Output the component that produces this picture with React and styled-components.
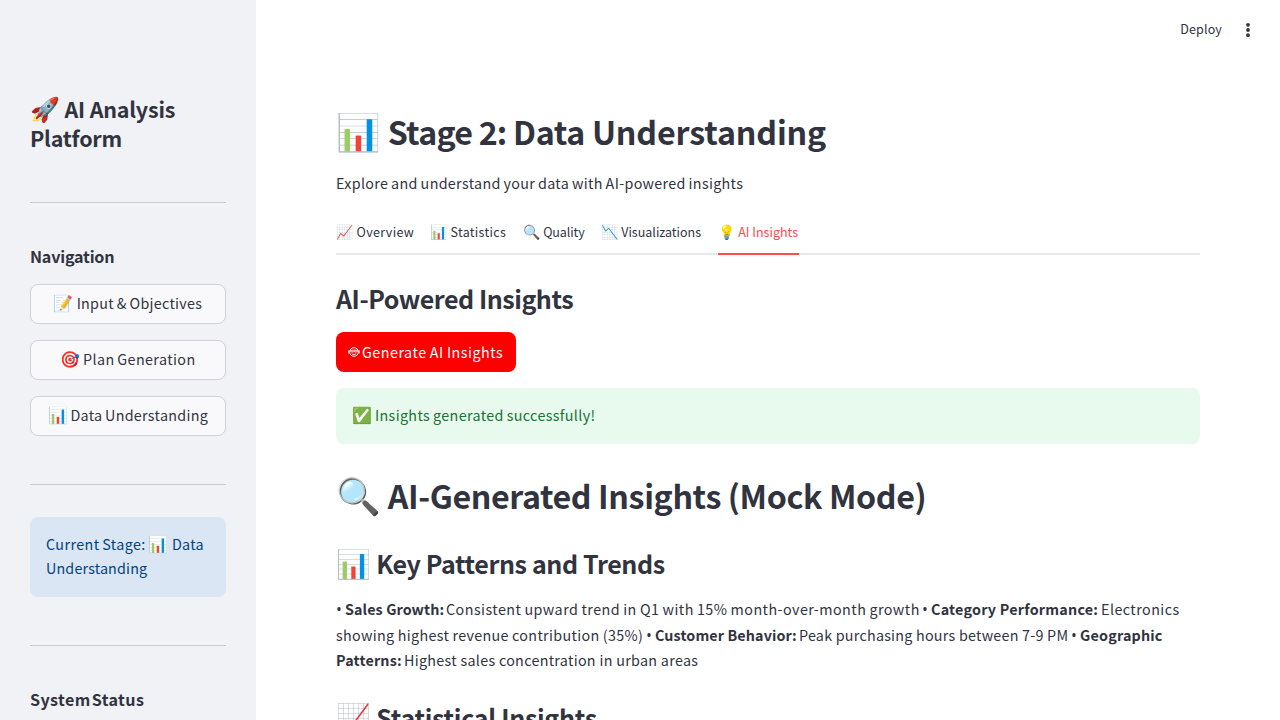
import React from "react";
import styled, { createGlobalStyle, css } from "styled-components";

const GlobalStyle = createGlobalStyle`
  * { box-sizing: border-box; }
  html, body { margin: 0; padding: 0; height: 100%; overflow: hidden; }
  body {
    font-family: "Noto Sans CJK SC", sans-serif;
    color: #31333f;
    background: #fff;
  }
`;

/* The face runs large for its nominal size, so text is set at 0.895 of the design size. */
const type = (size, line, weight = 400) => css`
  font-size: ${size * 0.895}px;
  line-height: ${line}px;
  font-weight: ${weight};
  letter-spacing: ${(p) => p.$track || 0}px;
  word-spacing: ${(p) => p.$gap || 0}px;
  white-space: nowrap;
`;

const Page = styled.div`
  display: flex;
  height: 720px;
  overflow: hidden;
`;

const Sidebar = styled.aside`
  width: 256px;
  flex: none;
  background: #f0f2f6;
  padding: 94px 30px 0;
`;

const SidebarTitle = styled.h2`
  margin: 0;
  height: 60px;
  ${type(24, 29, 600)}
`;

const Rule = styled.hr`
  border: 0;
  height: 1px;
  margin: ${(p) => p.$top}px 0 ${(p) => p.$bottom}px;
  background: #cacbd1;
`;

const SidebarHeading = styled.h3`
  margin: 0;
  height: 23px;
  ${type(18, 22, 600)}
`;

const NavList = styled.nav`
  display: flex;
  flex-direction: column;
  gap: 16px;
  margin-top: 16px;
`;

const NavButton = styled.button`
  display: flex;
  align-items: center;
  justify-content: center;
  height: 40px;
  padding: 0 0 2px;
  border: 1px solid #d0d2d8;
  border-radius: 8px;
  background: #f9f9fb;
  color: inherit;
  font-family: inherit;
  ${type(16, 24)}
`;

const StageInfo = styled.div`
  height: 80px;
  padding: 15px 16px;
  border-radius: 8px;
  background: #dae6f4;
  color: #004280;
  ${type(16, 24)}
`;

const Main = styled.main`
  flex: 1;
  min-width: 0;
`;

const Toolbar = styled.header`
  display: flex;
  align-items: center;
  justify-content: flex-end;
  gap: 18px;
  height: 60px;
  padding-right: 24px;
`;

const DeployLabel = styled.span`
  padding-bottom: 2px;
  ${type(14, 20)}
`;

const Content = styled.div`
  padding: 49px 80px 0;
`;

const Title = styled.h1`
  margin: ${(p) => p.$top || 0}px 0 0;
  height: 46px;
  ${type(36, 44, 600)}
`;

const Heading = styled.h2`
  margin: ${(p) => p.$top}px 0 0;
  height: 36px;
  ${type(28, 34, 600)}
`;

const Lead = styled.p`
  margin: 15px 0 0;
  ${type(16, 26)}
`;

const TabBar = styled.div`
  display: flex;
  gap: 16px;
  height: 40px;
  margin-top: 19px;
  box-shadow: inset 0 -2px #e8e8ea;
`;

const Tab = styled.button`
  height: 40px;
  padding: 0 0 4px;
  border: 0;
  border-bottom: 2px solid ${(p) => (p.$active ? "#ff4b4b" : "transparent")};
  background: none;
  color: ${(p) => (p.$active ? "#ff4b4b" : "inherit")};
  font-family: inherit;
  text-align: left;
  width: ${(p) => p.$width}px;
  ${type(14, 32)}
`;

const PrimaryButton = styled.button`
  display: flex;
  align-items: center;
  width: 180px;
  height: 40px;
  margin-top: 15px;
  padding: 0 12px;
  border: 0;
  border-radius: 8px;
  background: #ff0000;
  color: #fff;
  font-family: inherit;
  ${type(16, 24)}
`;

const Success = styled.div`
  height: 56px;
  margin-top: 16px;
  padding: 15px 16px;
  border-radius: 8px;
  background: #e8f9ee;
  color: #177233;
  ${type(16, 24)}
`;

const Findings = styled.div`
  margin-top: 14px;
`;

const Line = styled.div`
  display: flex;
  align-items: baseline;
  height: 25.6px;
  ${type(16, 25.6)}
`;

const Run = styled.span`
  letter-spacing: ${(p) => p.$track}px;
  word-spacing: ${(p) => p.$gap || 0}px;
  font-weight: ${(p) => (p.$strong ? 600 : 400)};
  width: ${(p) => p.$width}px;
  flex: none;
`;

const Bullet = styled.span`
  width: 9px;
  flex: none;
  font-family: "Open Sans", sans-serif;
  font-size: 15.5px;
  line-height: 20px;
  letter-spacing: 0;
`;

const Emoji = styled.span`
  font-family: "Noto Color Emoji", sans-serif;
  font-size: 1.117em;
  font-weight: 400;
  line-height: 0;
  letter-spacing: 0;
`;

const KebabIcon = () => (
  <svg width="16" height="16" viewBox="0 0 16 16" fill="#31333f">
    <circle cx="8" cy="2.8" r="1.9" />
    <circle cx="8" cy="8" r="1.9" />
    <circle cx="8" cy="13.2" r="1.9" />
  </svg>
);

const RobotSvg = styled.svg`
  flex: none;
  margin-right: 2px;
`;

const RobotIcon = () => (
  <RobotSvg width="12" height="12" viewBox="0 0 12 12" fill="none" stroke="#fff">
    <ellipse cx="6" cy="6" rx="4.4" ry="4.3" strokeWidth="1" />
    <path d="M0.8 4.4v3M11.2 4.4v3" strokeWidth="1" />
    <path d="M2.6 4.1h6.8v1.5l-1.4.7-2-.6-2 .6-1.4-.7z" fill="#fff" fillOpacity="0.45" strokeWidth="0.6" />
    <path d="M3.8 7.8c1.2.9 3.2.9 4.4 0" strokeWidth="0.9" />
  </RobotSvg>
);

const tabs = [
  { icon: "📈", label: "Overview", width: 78, track: 0.33 },
  { icon: "📊", label: "Statistics", width: 77, track: 0.3 },
  { icon: "🔍", label: "Quality", width: 62, track: -0.1 },
  { icon: "📉", label: "Visualizations", width: 101, track: 0 },
  { icon: "💡", label: "AI Insights", width: 81, track: 0, active: true },
];

const stages = [
  { icon: "📝", label: "Input & Objectives", track: 0.27, gap: -0.6 },
  { icon: "🎯", label: "Plan Generation", track: 0.4, gap: -0.9 },
  { icon: "📊", label: "Data Understanding", track: 0.3, gap: -0.9 },
];

export default function App() {
  return (
    <>
      <GlobalStyle />
      <Page>
        <Sidebar>
          <SidebarTitle $track={-0.2}>
            <Emoji>🚀</Emoji> AI Analysis
            <br />
            Platform
          </SidebarTitle>
          <Rule $top={48} $bottom={42} />
          <SidebarHeading $track={-0.2}>Navigation</SidebarHeading>
          <NavList>
            {stages.map((s) => (
              <NavButton key={s.label} $track={s.track} $gap={s.gap}>
                <span><Emoji>{s.icon}</Emoji> {s.label}</span>
              </NavButton>
            ))}
          </NavList>
          <Rule $top={48} $bottom={32} />
          <StageInfo $track={0.3}>
            <Run $track={0.4} $gap={-0.8}>Current Stage: </Run>
            <Emoji>📊</Emoji> Data
            <br />
            <Run $track={0.16}>Understanding</Run>
          </StageInfo>
          <Rule $top={48} $bottom={42} />
          <SidebarHeading $track={0.4} $gap={-3}>System Status</SidebarHeading>
        </Sidebar>
        <Main>
          <Toolbar>
            <DeployLabel $track={0.15}>Deploy</DeployLabel>
            <KebabIcon />
          </Toolbar>
          <Content>
            <Title $track={-0.3}>
              <Emoji>📊</Emoji> <Run $strong $track={-0.8}>Stage 2: </Run>
              <Run $strong $track={-0.35}>Data </Run>
              <Run $strong $track={-0.15}>Understanding</Run>
            </Title>
            <Lead $track={0.32} $gap={-0.65}>Explore and understand your data with AI-powered insights</Lead>
            <TabBar>
              {tabs.map((t) => (
                <Tab key={t.label} $active={t.active} $width={t.width} $track={t.track}>
                  <Emoji>{t.icon}</Emoji> {t.label}
                </Tab>
              ))}
            </TabBar>
            <Heading $top={26}>
              <Run $track={-0.47} $strong>AI-Powered Insights</Run>
            </Heading>
            <PrimaryButton $track={0.5} $gap={-0.5}><RobotIcon />Generate AI Insights</PrimaryButton>
            <Success $track={0.35} $gap={-0.5}><Emoji>✅</Emoji> Insights generated successfully!</Success>
            <Title $top={29} $track={-0.4}><Emoji>🔍</Emoji> AI-Generated Insights (Mock Mode)</Title>
            <Heading $top={27} $track={-0.4}><Emoji>📊</Emoji> Key Patterns and Trends</Heading>
            <Findings>
              <Line>
                <Bullet>•</Bullet>
                <Run $strong $track={0.1} $width={101}>Sales Growth:</Run>
                <Run $track={0.45} $gap={-0.5} $width={476}>Consistent upward trend in Q1 with 15% month-over-month growth</Run>
                <Bullet>•</Bullet>
                <Run $strong $track={0.24} $width={170}>Category Performance:</Run>
                <Run $track={0.45}>Electronics</Run>
              </Line>
              <Line>
                <Run $track={0.32} $gap={-0.2} $width={310}>showing highest revenue contribution (35%)</Run>
                <Bullet>•</Bullet>
                <Run $strong $track={0.12} $width={144}>Customer Behavior:</Run>
                <Run $track={0.24} $width={272}>Peak purchasing hours between 7-9 PM</Run>
                <Bullet>•</Bullet>
                <Run $strong $track={0.2}>Geographic</Run>
              </Line>
              <Line>
                <Run $strong $track={0.2} $width={68}>Patterns:</Run>
                <Run $track={0.3}>Highest sales concentration in urban areas</Run>
              </Line>
            </Findings>
            <Heading $top={27} $track={-0.3}><Emoji>📈</Emoji> Statistical Insights</Heading>
          </Content>
        </Main>
      </Page>
    </>
  );
}
